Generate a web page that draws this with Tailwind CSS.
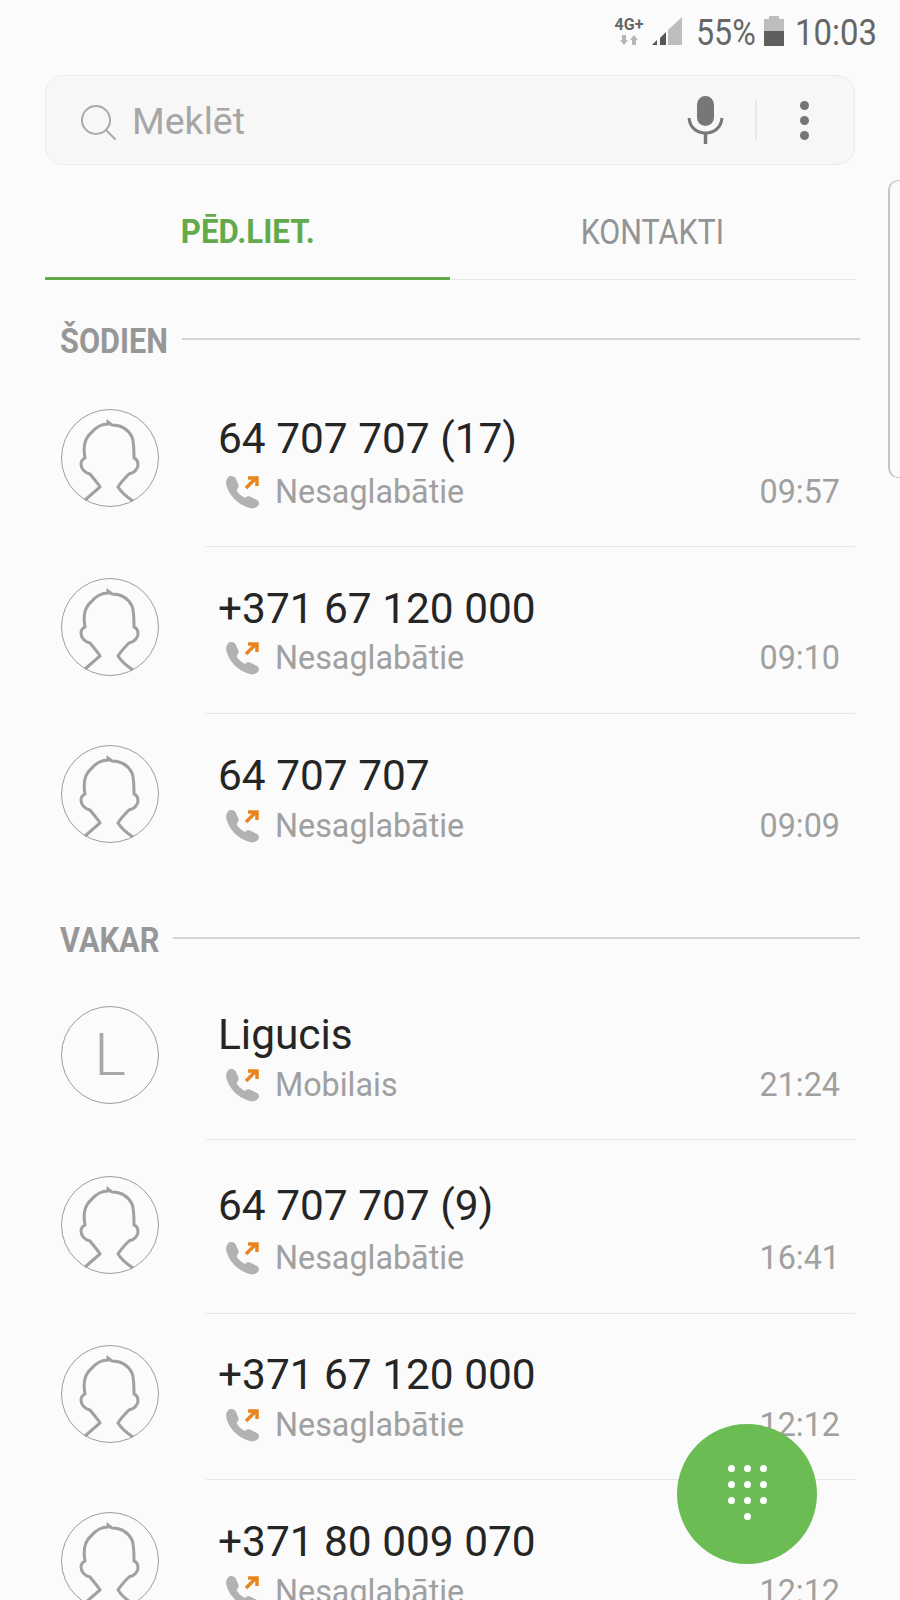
<!DOCTYPE html>
<html lang="lv">
<head>
    <meta charset="UTF-8">
    <meta name="viewport" content="width=device-width, initial-scale=1.0">
    <title>Tālrunis</title>
    <script src="https://cdn.jsdelivr.net/npm/@tailwindcss/browser@4"></script>
</head>
<body class="bg-[#fbfbfb] font-[Roboto,sans-serif]">
<div class="relative w-[900px] h-[1600px] overflow-hidden">

    <!-- Status bar -->
    <header class="h-[75px] flex justify-end items-start pt-[15px] pr-[24px] text-[#666666]">
        <div class="w-[32px] mt-[1px] flex flex-col items-center">
            <span class="text-[16px] leading-[17px] font-bold">4G+</span>
            <svg width="20" height="12" viewBox="0 0 20 12" class="mt-[1px]"><path d="M3 1h4v5h2l-4 5-4-5h2z" fill="#b5b5b5"/><path d="M13 11h4V6h2l-4-5-4 5h2z" fill="#b5b5b5"/></svg>
        </div>
        <svg width="30" height="28" viewBox="0 0 30 28" class="ml-[7px] mt-[2px]">
            <path d="M30 0v28H16V13z" fill="#bdbdbd"/>
            <path d="M14 15v13H8v-7z" fill="#555555"/>
            <path d="M5 23v5H0z" fill="#555555"/>
        </svg>
        <span class="w-[58px] ml-[14px] mr-[1px] text-[37px] leading-[35px] scale-x-[0.87] origin-left inline-block whitespace-nowrap">55%</span>
        <svg width="20" height="30" viewBox="0 0 20 30" class="ml-[9px] mt-[1px]">
            <path d="M5 0h10v3h5v12H0V3h5z" fill="#bdbdbd"/>
            <path d="M0 15h20v15H0z" fill="#5f5f5f"/>
        </svg>
        <span class="w-[81px] ml-[11px] text-[37px] leading-[35px] scale-x-[0.89] origin-left inline-block whitespace-nowrap">10:03</span>
    </header>

    <!-- Search -->
    <div class="mx-[45px] h-[90px] bg-[#f7f7f7] border border-[#ebebeb] rounded-[18px] flex items-center">
        <svg width="40" height="40" viewBox="0 0 40 40" class="ml-[30px] mt-[3px]" fill="none" stroke="#a8a8a8" stroke-width="2">
            <circle cx="20" cy="18" r="14"/><path d="M30 28l9 9" stroke-linecap="round"/>
        </svg>
        <span class="ml-[16px] mt-[3px] text-[37.500px] leading-none text-[#a6a6a6]">Meklēt</span>
        <svg width="40" height="52" viewBox="0 0 40 52" class="ml-auto mt-[2px]" fill="none">
            <rect x="11" y="1" width="17" height="30" rx="8.500" fill="#777777"/>
            <path d="M3 23c1 10 8 15 16.500 15S35 33 36 23" stroke="#777777" stroke-width="3"/>
            <path d="M19.500 38v11" stroke="#777777" stroke-width="3.500"/>
        </svg>
        <div class="w-[2px] h-[40px] bg-[#e8e8e8] ml-[29px]"></div>
        <div class="ml-[43px] mr-[45px] flex flex-col gap-[6px]">
            <div class="w-[9px] h-[9px] rounded-full bg-[#767676]"></div>
            <div class="w-[9px] h-[9px] rounded-full bg-[#767676]"></div>
            <div class="w-[9px] h-[9px] rounded-full bg-[#767676]"></div>
        </div>
    </div>

    <!-- Tabs -->
    <nav class="mx-[45px] h-[115px] flex border-b border-[#e6e6e6]">
        <div class="w-[405px] h-[115px] border-b-[3px] border-[#62aa4b] flex items-center justify-center pt-[20px]">
            <span class="inline-block text-[34px] leading-none font-bold text-[#62aa4b] scale-x-[0.92] whitespace-nowrap">PĒD.LIET.</span>
        </div>
        <div class="flex-1 flex items-center justify-center pt-[20px]">
            <span class="inline-block text-[35px] leading-none text-[#939393] scale-x-[0.87] whitespace-nowrap">KONTAKTI</span>
        </div>
    </nav>

    <!-- Šodien -->
    <div class="h-[93px] ml-[60px] mr-[40px] flex items-start pt-[40px]">
        <span class="w-[122px] text-[35px] leading-[44px] font-bold text-[#979797] scale-x-[0.877] origin-left inline-block whitespace-nowrap">ŠODIEN</span>
        <div class="flex-1 h-[2px] bg-[#d4d4d4] mt-[18px]"></div>
    </div>

    <div class="flex h-[174px] pl-[61px] pr-[45px]">
        <div class="w-[98px] h-[98px] mt-[36px] shrink-0">
            <svg width="98" height="98" viewBox="0 0 98 98" fill="none"><circle cx="49" cy="49" r="48.500" stroke="#9c9c9c"/><path d="M24 91L39 78C36 73 32 69 29 65C24 64 20 60 20 55C20 52 22 50 24 49C22 38 24 29 30 24C35 18 41 15 47 15L47 13L51 16C60 16 67 20 71 28C73 33 73 42 73 49C76 50 77 53 77 56C77 60 73 64 68 65C64 69 60 73 57 78C60 83 66 88 72 92" stroke="#a0a0a0" stroke-width="3"/></svg>
        </div>
        <div class="ml-[47px] flex-1 border-b border-[#e6e6e6] pt-[40px]">
            <div class="pl-[12px] pt-[2px] text-[42.400px] leading-[48px] text-[#252525]">64 707 707 (17)</div>
            <div class="mt-[4px] pl-[20px] pr-[15px] flex items-center h-[50px] text-[32.300px] text-[#a0a0a0]">
                <svg width="34" height="34" viewBox="0 0 34 34" fill="none" class="mt-[2px]"><path d="M3 .5C6-.5 9 .5 10 3L12.500 9C13 11 12 12.500 10.500 14C12 17 15 20 19 22C20.500 20.500 22 20 24 20.500L31 24C33 25 33.500 27.500 32.500 29C30.500 32 27 33 23.500 32C11 28.500 2 18 .2 8C-.3 5 1 2 3 .5Z" fill="#b2b2b2"/><path d="M20 12L30 2M22 2H31V10" stroke="#e8861c" stroke-width="3.500"/></svg>
                <span class="ml-[15px]">Nesaglabātie</span>
                <span class="ml-auto">09:57</span>
            </div>
        </div>
    </div>

    <div class="flex h-[167px] pl-[61px] pr-[45px]">
        <div class="w-[98px] h-[98px] mt-[31px] shrink-0">
            <svg width="98" height="98" viewBox="0 0 98 98" fill="none"><circle cx="49" cy="49" r="48.500" stroke="#9c9c9c"/><path d="M24 91L39 78C36 73 32 69 29 65C24 64 20 60 20 55C20 52 22 50 24 49C22 38 24 29 30 24C35 18 41 15 47 15L47 13L51 16C60 16 67 20 71 28C73 33 73 42 73 49C76 50 77 53 77 56C77 60 73 64 68 65C64 69 60 73 57 78C60 83 66 88 72 92" stroke="#a0a0a0" stroke-width="3"/></svg>
        </div>
        <div class="ml-[47px] flex-1 border-b border-[#e6e6e6] pt-[36px]">
            <div class="pl-[12px] pt-[2px] text-[42.400px] leading-[48px] text-[#252525]">+371 67 120 000</div>
            <div class="pl-[20px] pr-[15px] flex items-center h-[50px] text-[32.300px] text-[#a0a0a0]">
                <svg width="34" height="34" viewBox="0 0 34 34" fill="none" class="mt-[2px]"><path d="M3 .5C6-.5 9 .5 10 3L12.500 9C13 11 12 12.500 10.500 14C12 17 15 20 19 22C20.500 20.500 22 20 24 20.500L31 24C33 25 33.500 27.500 32.500 29C30.500 32 27 33 23.500 32C11 28.500 2 18 .2 8C-.3 5 1 2 3 .5Z" fill="#b2b2b2"/><path d="M20 12L30 2M22 2H31V10" stroke="#e8861c" stroke-width="3.500"/></svg>
                <span class="ml-[15px]">Nesaglabātie</span>
                <span class="ml-auto">09:10</span>
            </div>
        </div>
    </div>

    <div class="flex h-[167px] pl-[61px] pr-[45px]">
        <div class="w-[98px] h-[98px] mt-[31px] shrink-0">
            <svg width="98" height="98" viewBox="0 0 98 98" fill="none"><circle cx="49" cy="49" r="48.500" stroke="#9c9c9c"/><path d="M24 91L39 78C36 73 32 69 29 65C24 64 20 60 20 55C20 52 22 50 24 49C22 38 24 29 30 24C35 18 41 15 47 15L47 13L51 16C60 16 67 20 71 28C73 33 73 42 73 49C76 50 77 53 77 56C77 60 73 64 68 65C64 69 60 73 57 78C60 83 66 88 72 92" stroke="#a0a0a0" stroke-width="3"/></svg>
        </div>
        <div class="ml-[47px] flex-1 pt-[36px]">
            <div class="pl-[12px] pt-[2px] text-[42.400px] leading-[48px] text-[#252525]">64 707 707</div>
            <div class="mt-[1px] pl-[20px] pr-[15px] flex items-center h-[50px] text-[32.300px] text-[#a0a0a0]">
                <svg width="34" height="34" viewBox="0 0 34 34" fill="none" class="mt-[2px]"><path d="M3 .5C6-.5 9 .5 10 3L12.500 9C13 11 12 12.500 10.500 14C12 17 15 20 19 22C20.500 20.500 22 20 24 20.500L31 24C33 25 33.500 27.500 32.500 29C30.500 32 27 33 23.500 32C11 28.500 2 18 .2 8C-.3 5 1 2 3 .5Z" fill="#b2b2b2"/><path d="M20 12L30 2M22 2H31V10" stroke="#e8861c" stroke-width="3.500"/></svg>
                <span class="ml-[15px]">Nesaglabātie</span>
                <span class="ml-auto">09:09</span>
            </div>
        </div>
    </div>

    <!-- Vakar -->
    <div class="h-[89px] ml-[60px] mr-[40px] flex items-start pt-[38px]">
        <span class="w-[113px] text-[35px] leading-[44px] font-bold text-[#979797] scale-x-[0.877] origin-left inline-block whitespace-nowrap">VAKAR</span>
        <div class="flex-1 h-[2px] bg-[#d4d4d4] mt-[18px]"></div>
    </div>

    <div class="flex h-[170px] pl-[61px] pr-[45px]">
        <div class="w-[98px] h-[98px] mt-[36px] shrink-0 rounded-full border border-[#9c9c9c] flex items-center justify-center text-[60px] font-light leading-none text-[#a8a8a8]">L</div>
        <div class="ml-[47px] flex-1 border-b border-[#e6e6e6] pt-[39px]">
            <div class="pl-[12px] pt-[2px] text-[42.400px] leading-[48px] text-[#252525]">Ligucis</div>
            <div class="mt-[1px] pl-[20px] pr-[15px] flex items-center h-[50px] text-[32.300px] text-[#a0a0a0]">
                <svg width="34" height="34" viewBox="0 0 34 34" fill="none" class="mt-[2px]"><path d="M3 .5C6-.5 9 .5 10 3L12.500 9C13 11 12 12.500 10.500 14C12 17 15 20 19 22C20.500 20.500 22 20 24 20.500L31 24C33 25 33.500 27.500 32.500 29C30.500 32 27 33 23.500 32C11 28.500 2 18 .2 8C-.3 5 1 2 3 .5Z" fill="#b2b2b2"/><path d="M20 12L30 2M22 2H31V10" stroke="#e8861c" stroke-width="3.500"/></svg>
                <span class="ml-[15px]">Mobilais</span>
                <span class="ml-auto">21:24</span>
            </div>
        </div>
    </div>

    <div class="flex h-[174px] pl-[61px] pr-[45px]">
        <div class="w-[98px] h-[98px] mt-[36px] shrink-0">
            <svg width="98" height="98" viewBox="0 0 98 98" fill="none"><circle cx="49" cy="49" r="48.500" stroke="#9c9c9c"/><path d="M24 91L39 78C36 73 32 69 29 65C24 64 20 60 20 55C20 52 22 50 24 49C22 38 24 29 30 24C35 18 41 15 47 15L47 13L51 16C60 16 67 20 71 28C73 33 73 42 73 49C76 50 77 53 77 56C77 60 73 64 68 65C64 69 60 73 57 78C60 83 66 88 72 92" stroke="#a0a0a0" stroke-width="3"/></svg>
        </div>
        <div class="ml-[47px] flex-1 border-b border-[#e6e6e6] pt-[40px]">
            <div class="pl-[12px] pt-[2px] text-[42.400px] leading-[48px] text-[#252525]">64 707 707 (9)</div>
            <div class="mt-[3px] pl-[20px] pr-[15px] flex items-center h-[50px] text-[32.300px] text-[#a0a0a0]">
                <svg width="34" height="34" viewBox="0 0 34 34" fill="none" class="mt-[2px]"><path d="M3 .5C6-.5 9 .5 10 3L12.500 9C13 11 12 12.500 10.500 14C12 17 15 20 19 22C20.500 20.500 22 20 24 20.500L31 24C33 25 33.500 27.500 32.500 29C30.500 32 27 33 23.500 32C11 28.500 2 18 .2 8C-.3 5 1 2 3 .5Z" fill="#b2b2b2"/><path d="M20 12L30 2M22 2H31V10" stroke="#e8861c" stroke-width="3.500"/></svg>
                <span class="ml-[15px]">Nesaglabātie</span>
                <span class="ml-auto">16:41</span>
            </div>
        </div>
    </div>

    <div class="flex h-[166px] pl-[61px] pr-[45px]">
        <div class="w-[98px] h-[98px] mt-[31px] shrink-0">
            <svg width="98" height="98" viewBox="0 0 98 98" fill="none"><circle cx="49" cy="49" r="48.500" stroke="#9c9c9c"/><path d="M24 91L39 78C36 73 32 69 29 65C24 64 20 60 20 55C20 52 22 50 24 49C22 38 24 29 30 24C35 18 41 15 47 15L47 13L51 16C60 16 67 20 71 28C73 33 73 42 73 49C76 50 77 53 77 56C77 60 73 64 68 65C64 69 60 73 57 78C60 83 66 88 72 92" stroke="#a0a0a0" stroke-width="3"/></svg>
        </div>
        <div class="ml-[47px] flex-1 border-b border-[#e6e6e6] pt-[35px]">
            <div class="pl-[12px] pt-[2px] text-[42.400px] leading-[48px] text-[#252525]">+371 67 120 000</div>
            <div class="mt-[1px] pl-[20px] pr-[15px] flex items-center h-[50px] text-[32.300px] text-[#a0a0a0]">
                <svg width="34" height="34" viewBox="0 0 34 34" fill="none" class="mt-[2px]"><path d="M3 .5C6-.5 9 .5 10 3L12.500 9C13 11 12 12.500 10.500 14C12 17 15 20 19 22C20.500 20.500 22 20 24 20.500L31 24C33 25 33.500 27.500 32.500 29C30.500 32 27 33 23.500 32C11 28.500 2 18 .2 8C-.3 5 1 2 3 .5Z" fill="#b2b2b2"/><path d="M20 12L30 2M22 2H31V10" stroke="#e8861c" stroke-width="3.500"/></svg>
                <span class="ml-[15px]">Nesaglabātie</span>
                <span class="ml-auto">12:12</span>
            </div>
        </div>
    </div>

    <div class="flex h-[166px] pl-[61px] pr-[45px]">
        <div class="w-[98px] h-[98px] mt-[32px] shrink-0">
            <svg width="98" height="98" viewBox="0 0 98 98" fill="none"><circle cx="49" cy="49" r="48.500" stroke="#9c9c9c"/><path d="M24 91L39 78C36 73 32 69 29 65C24 64 20 60 20 55C20 52 22 50 24 49C22 38 24 29 30 24C35 18 41 15 47 15L47 13L51 16C60 16 67 20 71 28C73 33 73 42 73 49C76 50 77 53 77 56C77 60 73 64 68 65C64 69 60 73 57 78C60 83 66 88 72 92" stroke="#a0a0a0" stroke-width="3"/></svg>
        </div>
        <div class="ml-[47px] flex-1 pt-[36px]">
            <div class="pl-[12px] pt-[2px] text-[42.400px] leading-[48px] text-[#252525]">+371 80 009 070</div>
            <div class="mt-[1px] pl-[20px] pr-[15px] flex items-center h-[50px] text-[32.300px] text-[#a0a0a0]">
                <svg width="34" height="34" viewBox="0 0 34 34" fill="none" class="mt-[2px]"><path d="M3 .5C6-.5 9 .5 10 3L12.500 9C13 11 12 12.500 10.500 14C12 17 15 20 19 22C20.500 20.500 22 20 24 20.500L31 24C33 25 33.500 27.500 32.500 29C30.500 32 27 33 23.500 32C11 28.500 2 18 .2 8C-.3 5 1 2 3 .5Z" fill="#b2b2b2"/><path d="M20 12L30 2M22 2H31V10" stroke="#e8861c" stroke-width="3.500"/></svg>
                <span class="ml-[15px]">Nesaglabātie</span>
                <span class="ml-auto">12:12</span>
            </div>
        </div>
    </div>

    <!-- Scrollbar handle -->
    <div class="absolute right-0 top-[180px] w-[12px] h-[298px] border-l-2 border-y border-[#c4c4c4] rounded-l-[10px]"></div>

    <!-- Dial button -->
    <div class="absolute left-[677px] top-[1424px] w-[140px] h-[140px] rounded-full bg-[#6cbc54] flex justify-center pt-[41px]">
        <div class="grid grid-cols-3 gap-x-[9px] gap-y-[9px] w-[39px] h-fit">
            <div class="w-[7px] h-[7px] rounded-full bg-white"></div>
            <div class="w-[7px] h-[7px] rounded-full bg-white"></div>
            <div class="w-[7px] h-[7px] rounded-full bg-white"></div>
            <div class="w-[7px] h-[7px] rounded-full bg-white"></div>
            <div class="w-[7px] h-[7px] rounded-full bg-white"></div>
            <div class="w-[7px] h-[7px] rounded-full bg-white"></div>
            <div class="w-[7px] h-[7px] rounded-full bg-white"></div>
            <div class="w-[7px] h-[7px] rounded-full bg-white"></div>
            <div class="w-[7px] h-[7px] rounded-full bg-white"></div>
            <div class="w-[7px] h-[7px] rounded-full bg-white col-start-2"></div>
        </div>
    </div>
</div>
</body>
</html>
